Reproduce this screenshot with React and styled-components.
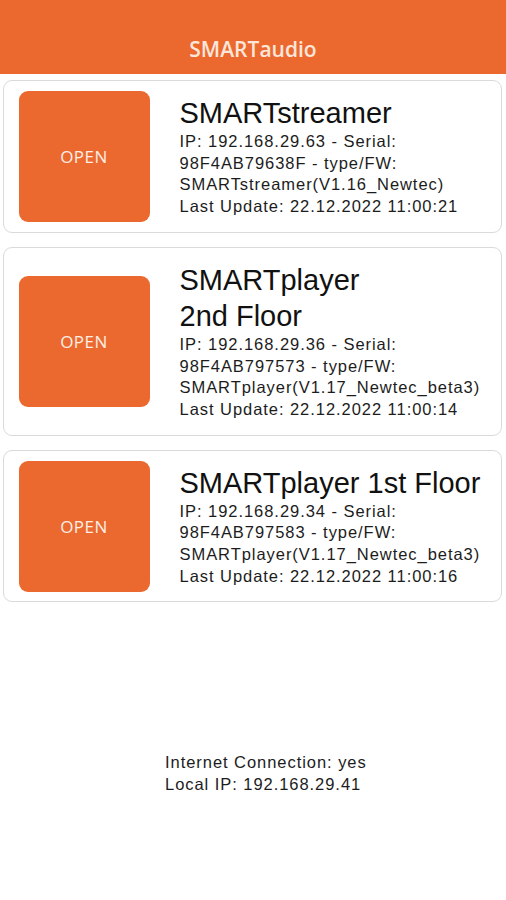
import React from "react";
import styled, { createGlobalStyle } from "styled-components";

const GlobalStyle = createGlobalStyle`
  html, body {
    margin: 0;
    padding: 0;
    background: #ffffff;
  }
  body {
    font-family: "Liberation Sans", Arial, sans-serif;
    color: #151515;
  }
`;

const devices = [
  {
    name: "SMARTstreamer",
    lines: [
      "IP: 192.168.29.63 - Serial:",
      "98F4AB79638F - type/FW:",
      "SMARTstreamer(V1.16_Newtec)",
      "Last Update: 22.12.2022 11:00:21",
    ],
  },
  {
    name: "SMARTplayer\n2nd Floor",
    lines: [
      "IP: 192.168.29.36 - Serial:",
      "98F4AB797573 - type/FW:",
      "SMARTplayer(V1.17_Newtec_beta3)",
      "Last Update: 22.12.2022 11:00:14",
    ],
  },
  {
    name: "SMARTplayer 1st Floor",
    lines: [
      "IP: 192.168.29.34 - Serial:",
      "98F4AB797583 - type/FW:",
      "SMARTplayer(V1.17_Newtec_beta3)",
      "Last Update: 22.12.2022 11:00:16",
    ],
  },
];

function App() {
  return (
    <Page>
      <GlobalStyle />
      <Header>
        <HeaderTitle>SMARTaudio</HeaderTitle>
      </Header>
      <DeviceList>
        {devices.map((d) => (
          <DeviceCard key={d.name}>
            <OpenButton type="button">OPEN</OpenButton>
            <DeviceInfo>
              <DeviceName>{d.name}</DeviceName>
              {d.lines.map((l, i) => (
                <DetailLine key={i}>{l}</DetailLine>
              ))}
            </DeviceInfo>
          </DeviceCard>
        ))}
      </DeviceList>
      <Footer>
        <DetailLine>Internet Connection: yes</DetailLine>
        <DetailLine>Local IP: 192.168.29.41</DetailLine>
      </Footer>
    </Page>
  );
}

const Page = styled.div`
  width: 506px;
  min-height: 900px;
  background: #ffffff;
`;

const Header = styled.header`
  height: 74px;
  box-sizing: border-box;
  background: #eb692e;
  display: flex;
  align-items: flex-end;
  justify-content: center;
  padding-bottom: 13px;
`;

const HeaderTitle = styled.h1`
  margin: 0;
  font-family: "Open Sans", sans-serif;
  font-size: 21px;
  font-weight: 600;
  line-height: 24px;
  color: #fce6da;
`;

const DeviceList = styled.div`
  display: flex;
  flex-direction: column;
  gap: 14px;
  padding: 6px 4px 0 3px;
`;

const DeviceCard = styled.div`
  display: flex;
  align-items: center;
  border: 1px solid #dadada;
  border-radius: 9px;
  background: #ffffff;
`;

const OpenButton = styled.button`
  flex: 0 0 131px;
  height: 131px;
  margin-left: 14.5px;
  border: none;
  border-radius: 9px;
  background: #eb692e;
  color: #fdeee6;
  font-family: "Open Sans", sans-serif;
  font-size: 17px;
  letter-spacing: 0.5px;
  padding: 0;
  cursor: pointer;
`;

const DeviceInfo = styled.div`
  flex: 1;
  min-width: 0;
  padding: 14px 14px 14px 30px;
`;

const DeviceName = styled.div`
  font-size: 29px;
  line-height: 36px;
  color: #111111;
  white-space: pre-line;
`;

const DetailLine = styled.div`
  font-size: 16.5px;
  line-height: 21.7px;
  letter-spacing: 0.95px;
  color: #1c1c1c;
  white-space: nowrap;
`;

const Footer = styled.footer`
  margin-top: 150px;
  padding-left: 165px;
`;

export default App;
